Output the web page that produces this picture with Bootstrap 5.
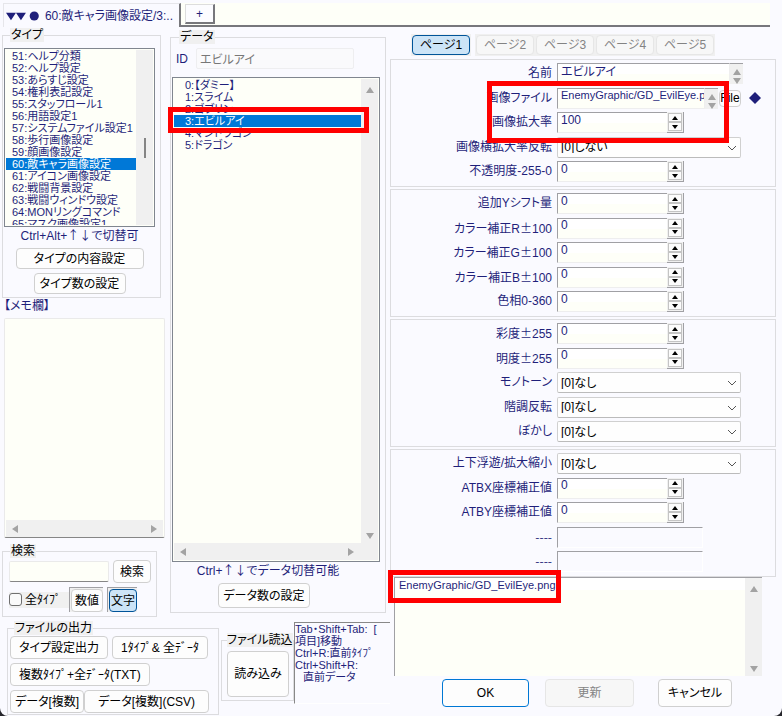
<!DOCTYPE html>
<html lang="ja">
<head>
<meta charset="utf-8">
<meta name="viewport" content="width=device-width, initial-scale=1">
<title>60:敵キャラ画像設定</title>
<link href="https://cdn.jsdelivr.net/npm/bootstrap@5.3.0/dist/css/bootstrap.min.css" rel="stylesheet">
<style>
:root{--ink:#1f1f7a;--paper:#fefff8;--face:#f0f0f0;--line:#dcdcdf;--edge:#a0a0a4;--hot:#ff0000}
html{background:#26262c}
body{background:transparent;color:var(--ink);font:12px/12px "Liberation Sans","Noto Sans CJK JP",sans-serif;font-feature-settings:"palt"}
button,input,select,textarea{font:inherit;font-feature-settings:inherit;color:inherit}
.app{background:#fafaff;min-height:100vh;border-radius:0 0 8px 8px;overflow:hidden}
.nowrap,.btn,label,.hint{white-space:nowrap}
.wide{font-family:"Noto Sans CJK JP",sans-serif;font-feature-settings:normal}
/* tab strip */
.strip{height:27px;padding:3px 12px 0 3px}
.tab-on{width:178px;border:1px solid #e6e6ea;border-width:1px 0 0 1px;border-right:2px solid #77777c;padding-left:2px;color:var(--ink);background:none}
.tab-rest{background:var(--paper);border-bottom:2px solid #77777c;padding:1px 0 0 4px;height:24px}
.tab-add{width:30px;height:20px;background:#fcfcff;border:1px solid #ddd;border-right:2px solid #77777c;border-bottom:2px solid #77777c;padding:0;line-height:14px}
/* page columns */
.split{display:grid;grid-template-columns:390fr 392fr}
.pair{display:grid;grid-template-columns:168fr 222fr}
fieldset.box{border:1px solid var(--line);min-width:0}
.box>legend{float:none;width:auto;height:14px;margin:0;padding:0 1px;font-size:12px;line-height:14px;background:var(--face);color:#000}
.type-box{margin:1px 7px 0 2px;padding:6px 5px 3px 1px}
.type-box>legend,.find-box>legend{margin-left:6px}
.data-box{margin:3px 4px 0 2px;padding:4px 5px 4px 1px}
.data-box>legend{margin-left:7px}
.find-box{margin:6px 11px 0 2px;padding:2px 5px 4px 6px}
.find-box>legend{margin-left:1px}
.out-box{margin:4px 0 0 7px;padding:1px 9px 1px 2px;width:212px}
.out-box>legend{margin-left:4px}
.read-box{margin:16px 0 0 2px;padding:4px 4px 3px 5px;width:73px}
.read-box>legend{padding:0}
/* list boxes */
.lbox{background:var(--paper);border:1px solid #80868f;padding:1px}
.lbox .list-group-item{border:0;border-radius:0;background:none;color:var(--ink);padding:0 0 0 6px;height:12px;line-height:12px;font-size:11px;white-space:nowrap;flex:none}
.lbox .list-group-item.active{background:#0078d7;color:#fff;margin:0}
.type-list{height:179px}
.data-list{height:485px}
.data-list .list-group-item{padding-left:11px}
.bar-v{width:17px;background:var(--face);flex:none}
.bar-h{height:17px;background:var(--face);padding:0 6px}
.thumb{width:2px;height:20px;background:#858585;margin-top:88px}
.tri{width:0;height:0;border:4px solid transparent}
.tri-u{border-bottom:6px solid #a3a3a3;border-top:0}
.tri-d{border-top:6px solid #a3a3a3;border-bottom:0}
.tri-l{border-right:6px solid #a3a3a3;border-left:0}
.tri-r{border-left:6px solid #a3a3a3;border-right:0}
.hint{line-height:16px}
/* push buttons */
.btn.key{--bs-btn-font-size:12px;--bs-btn-line-height:12px;--bs-btn-padding-x:0;--bs-btn-padding-y:0;--bs-btn-color:#000;--bs-btn-bg:#fdfdfd;--bs-btn-border-color:#d0d0d0;--bs-btn-border-radius:4px;--bs-btn-hover-color:#000;--bs-btn-hover-bg:#eef6fd;--bs-btn-hover-border-color:#0078d7;--bs-btn-disabled-color:#838383;--bs-btn-disabled-bg:#f7f7f7;--bs-btn-disabled-border-color:#e6e6e6;--bs-btn-disabled-opacity:1;--bs-btn-active-color:#000;--bs-btn-active-bg:#cce4f7;--bs-btn-active-border-color:#005499}
.key.main-key{--bs-btn-border-color:#0078d4}
.h21{height:21px}.h23{height:23px}.h25{height:25px}.h28{height:28px}
.w28{width:28px}.w32{width:32px}.w92{width:92px}.w128{width:128px}
.sunk{border-top:1px solid var(--edge);border-left:1px solid var(--edge);padding:1px 0 0 1px;background:var(--face)}
.page-keys{margin:7px 0 3px 21px}
.page-keys>span{background:var(--face);padding:1px;width:60px}
.page-keys .key{width:58px;height:20px}
/* text fields */
.field{background:linear-gradient(#fff 55%,var(--paper) 55%);border:1px solid #eee;border-top-color:var(--edge);border-left-color:var(--edge);border-radius:0;padding:0 0 6px 3px;height:21px;min-width:0;outline-offset:-1px}
.field.empty{background:#fafaff;border-color:var(--edge) #fff #fff var(--edge);width:146px}
.id-field{height:21px;border:1px solid #eeeef0;background:#fafafc;color:#777;padding:0 3px;min-width:0;width:158px;border-radius:2px}
.find-field{height:21px;width:100px;border:1px solid #eaeaea;border-bottom-color:#868686;background:var(--paper);border-radius:2px}
.area{display:block;width:100%;resize:none;border:0;background:transparent;padding:1px 4px;overflow:hidden;outline:0}
.memo{margin:4px 3px 0 4px;border:1px solid #eaeaea;border-bottom-color:#868686;border-radius:2px;background:var(--paper);padding:0 1px}
.memo .area{height:201px}
.memo-label{height:16px;line-height:16px;padding-left:4px}
.tick{width:13px;height:13px;margin:0 3px 0 0;border:1px solid #707070;border-radius:3px;appearance:none;background:#fafafa}
.tick:checked{background:#0078d4}
.tick-row{background:var(--face);height:16px;width:60px;color:#000}
.help{margin-top:5px;height:82px;border-top:1px solid #888;border-left:1px solid #888;border-bottom:1px solid #fff;overflow:hidden}
.help p{margin:0;font-size:11px;line-height:12px;white-space:nowrap}
/* property groups */
.grp{border:1px solid var(--line);margin:0 6px 0 0;padding:3px 3px 4px;min-height:128px;display:flex;flex-direction:column;justify-content:space-between;position:relative}
.grp+.grp{margin-top:2px}
.line{display:grid;grid-template-columns:158px 1fr;column-gap:5px;height:21px}
.line>label{text-align:right;line-height:20px}
.num{width:110px;appearance:textfield;border-right:0}
.num::-webkit-inner-spin-button{appearance:none}
.spin{width:17px;background:var(--face);border-right:1px solid var(--edge);border-bottom:1px solid var(--edge);padding:1px}
.spin button{flex:1;border:1px solid #c4c4c4;background:#fcfcfc;padding:0;line-height:0}
.spin svg{display:block;margin:auto}
.pick{width:184px;height:21px;border:1px solid #d0d0d0;border-bottom-color:#bbb;border-radius:2px;background:#fefefe;color:#000;line-height:12px;padding:0 20px 0 3px;appearance:none}
.pick-wrap{position:relative;width:184px}
.pick-wrap svg{position:absolute;right:4px;top:8px;pointer-events:none}
.name-field{width:173px}.file-field{width:148px;font-size:11px}
.mini{width:13px;background:var(--face);padding-top:5px;gap:3px;border-top:1px solid var(--edge)}
.file-key{width:22px;height:17px;margin:2px 0 0 1px}
.note{margin:0 20px 3px 4px;border-top:1px solid var(--edge);border-left:1px solid var(--edge);background:var(--paper);position:relative}
.note .area{height:98px;font-size:11px;background:linear-gradient(#fff 12px,transparent 12px)}
.w87{width:87px}.w89{width:89px}.w74{width:74px}
/* red call-outs laid over the form */
.callout{position:absolute;border:5px solid var(--hot);pointer-events:none;z-index:2}
.co-file{left:96px;top:21px;width:242px;height:62px}
.co-item{left:-5px;top:29px;width:201px;height:26px}
.co-note{left:-7px;top:-8px;width:173px;height:33px}
</style>
<script src="https://cdn.jsdelivr.net/npm/bootstrap@5.3.0/dist/js/bootstrap.bundle.min.js"></script>
</head>
<body>
<div class="app">
<header class="strip d-flex">
  <button type="button" class="tab-on d-flex align-items-center gap-1 nowrap">
    <svg width="42" height="12" viewBox="0 0 42 12" fill="#1f1f7a" aria-hidden="true"><path d="M0 2h12L6 11zM12 2h12L18 11z"/><circle cx="34" cy="6" r="5.500"/></svg>60:敵キャラ画像設定/3:..</button>
  <div class="tab-rest flex-grow-1"><button type="button" class="tab-add">+</button></div>
</header>

<main class="split">
<div>
  <div class="pair">
    <section>
      <fieldset class="box type-box">
        <legend>タイプ</legend>
        <div class="lbox type-list d-flex overflow-hidden">
          <div class="list-group rounded-0 flex-grow-1 overflow-hidden" role="listbox" aria-label="タイプ">
            <button type="button" class="list-group-item text-start">51:ヘルプ分類</button>
            <button type="button" class="list-group-item text-start">52:ヘルプ設定</button>
            <button type="button" class="list-group-item text-start">53:あらすじ設定</button>
            <button type="button" class="list-group-item text-start">54:権利表記設定</button>
            <button type="button" class="list-group-item text-start">55:スタッフロール1</button>
            <button type="button" class="list-group-item text-start">56:用語設定1</button>
            <button type="button" class="list-group-item text-start">57:システムファイル設定1</button>
            <button type="button" class="list-group-item text-start">58:歩行画像設定</button>
            <button type="button" class="list-group-item text-start">59:顔画像設定</button>
            <button type="button" class="list-group-item text-start active">60:敵キャラ画像設定</button>
            <button type="button" class="list-group-item text-start">61:アイコン画像設定</button>
            <button type="button" class="list-group-item text-start">62:戦闘背景設定</button>
            <button type="button" class="list-group-item text-start">63:戦闘ウィンドウ設定</button>
            <button type="button" class="list-group-item text-start">64:MONリングコマンド</button>
            <button type="button" class="list-group-item text-start">65:マスク画像設定1</button>
          </div>
          <div class="bar-v d-flex justify-content-center"><div class="thumb"></div></div>
        </div>
        <div class="hint text-center">Ctrl+Alt+<span class="wide">↑↓</span>で切替可</div>
        <div class="d-flex flex-column align-items-center gap-1 pt-1">
          <button type="button" class="btn key h21 w128">タイプの内容設定</button>
          <button type="button" class="btn key h21 w92">タイプ数の設定</button>
        </div>
      </fieldset>
      <label class="memo-label d-block" for="memo">【メモ欄】</label>
      <div class="memo">
        <textarea class="area" id="memo"></textarea>
        <div class="bar-h d-flex justify-content-between align-items-center"><i class="tri tri-l"></i><i class="tri tri-r"></i></div>
      </div>
      <fieldset class="box find-box">
        <legend>検索</legend>
        <div class="d-flex align-items-center gap-1">
          <input class="find-field" type="text" aria-label="検索文字">
          <button type="button" class="btn key h23 flex-grow-1">検索</button>
        </div>
        <div class="d-flex align-items-center pt-1">
          <label class="tick-row d-flex align-items-center" for="all"><input class="tick" type="checkbox" id="all">全ﾀｲﾌﾟ</label>
          <span class="sunk d-flex"><button type="button" class="btn key h23 w32">数値</button></span>
          <span class="sunk d-flex ms-1"><button type="button" class="btn key h23 w28 active">文字</button></span>
        </div>
      </fieldset>
    </section>

    <section>
      <fieldset class="box data-box">
        <legend>データ</legend>
        <div class="d-flex align-items-center">
          <label class="ps-1 pe-2" for="idname">ID</label>
          <input class="id-field" id="idname" type="text" value="エビルアイ" disabled>
        </div>
        <div class="lbox data-list d-flex flex-column position-relative mt-2">
          <div class="d-flex flex-grow-1">
            <div class="list-group rounded-0 flex-grow-1" role="listbox" aria-label="データ">
              <button type="button" class="list-group-item text-start">0:【ダミー】</button>
              <button type="button" class="list-group-item text-start">1:スライム</button>
              <button type="button" class="list-group-item text-start">2:ゴブリン</button>
              <button type="button" class="list-group-item text-start active">3:エビルアイ</button>
              <button type="button" class="list-group-item text-start">4:マンドラゴン</button>
              <button type="button" class="list-group-item text-start">5:ドラゴン</button>
            </div>
            <div class="bar-v d-flex flex-column align-items-center justify-content-between py-1"><i class="tri tri-u mt-1"></i><i class="tri tri-d"></i></div>
          </div>
          <div class="bar-h d-flex justify-content-between align-items-center pe-4"><i class="tri tri-l"></i><i class="tri tri-r"></i></div>
          <div class="callout co-item"></div>
        </div>
        <div class="hint text-center pe-3">Ctrl+<span class="wide">↑↓</span>でデータ切替可能</div>
        <div class="text-center pt-1 pe-4"><button type="button" class="btn key h25 w92">データ数の設定</button></div>
      </fieldset>
    </section>
  </div>

  <div class="d-flex align-items-start">
    <fieldset class="box out-box flex-shrink-0">
      <legend>ファイルの出力</legend>
      <div class="d-flex flex-column gap-1">
        <div class="d-flex gap-1"><button type="button" class="btn key h23 px-2">タイプ設定出力</button><button type="button" class="btn key h23 px-2">1ﾀｲﾌﾟ&amp; 全ﾃﾞｰﾀ</button></div>
        <div class="d-flex"><button type="button" class="btn key h23 px-2">複数ﾀｲﾌﾟ+全ﾃﾞｰﾀ(TXT)</button></div>
        <div class="d-flex"><button type="button" class="btn key h23 px-1">データ[複数]</button><button type="button" class="btn key h23 flex-grow-1">データ[複数](CSV)</button></div>
      </div>
    </fieldset>
    <fieldset class="box read-box flex-shrink-0">
      <legend class="nowrap">ファイル読込</legend>
      <button type="button" class="btn key w-100 py-3">読み込み</button>
    </fieldset>
    <div class="help flex-grow-1">
      <p>Tab・Shift+Tab:&nbsp; [</p><p>項目]移動</p><p>Ctrl+R:直前ﾀｲﾌﾟ</p><p>Ctrl+Shift+R:</p><p class="ps-2">直前データ</p>
    </div>
  </div>
</div>

<div>
  <nav class="page-keys d-flex" aria-label="ページ">
    <span><button type="button" class="btn key active">ページ1</button></span>
    <span class="ms-1"><button type="button" class="btn key" disabled>ページ2</button></span>
    <span><button type="button" class="btn key" disabled>ページ3</button></span>
    <span><button type="button" class="btn key" disabled>ページ4</button></span>
    <span><button type="button" class="btn key" disabled>ページ5</button></span>
  </nav>

  <div class="grp">
    <div class="line"><label for="f0">名前</label><div class="d-flex"><input class="field name-field" id="f0" type="text" value="エビルアイ"><span class="mini d-flex flex-column align-items-center"><i class="tri tri-u"></i><i class="tri tri-d"></i></span></div></div>
    <div class="line"><label for="f1">画像ファイル</label><div class="d-flex"><input class="field file-field" id="f1" type="text" value="EnemyGraphic/GD_EvilEye.png"><span class="mini d-flex flex-column align-items-center"><i class="tri tri-u"></i><i class="tri tri-d"></i></span><button type="button" class="btn key file-key">File</button><svg class="ms-2 mt-1" width="12" height="12" viewBox="0 0 12 12" aria-hidden="true"><path d="M6 0l6 6-6 6-6-6z" fill="#1f1f7a"/></svg></div></div>
    <div class="line"><label for="f2">画像拡大率</label><div class="d-flex" data-spin="100" data-id="f2"></div></div>
    <div class="line"><label for="f3">画像横拡大率反転</label><div class="pick-wrap"><select class="pick" id="f3"><option>[0]しない</option></select><svg width="10" height="6" viewBox="0 0 10 6" fill="none" stroke="#555"><path d="M1 1l4 4 4-4"/></svg></div></div>
    <div class="line"><label for="f4">不透明度-255-0</label><div class="d-flex" data-spin="0" data-id="f4"></div></div>
    <div class="callout co-file"></div>
  </div>
  <div class="grp">
    <div class="line"><label for="g0">追加Yシフト量</label><div class="d-flex" data-spin="0" data-id="g0"></div></div>
    <div class="line"><label for="g1">カラー補正R<span class="wide">±</span>100</label><div class="d-flex" data-spin="0" data-id="g1"></div></div>
    <div class="line"><label for="g2">カラー補正G<span class="wide">±</span>100</label><div class="d-flex" data-spin="0" data-id="g2"></div></div>
    <div class="line"><label for="g3">カラー補正B<span class="wide">±</span>100</label><div class="d-flex" data-spin="0" data-id="g3"></div></div>
    <div class="line"><label for="g4">色相0-360</label><div class="d-flex" data-spin="0" data-id="g4"></div></div>
  </div>
  <div class="grp">
    <div class="line"><label for="h0">彩度<span class="wide">±</span>255</label><div class="d-flex" data-spin="0" data-id="h0"></div></div>
    <div class="line"><label for="h1">明度<span class="wide">±</span>255</label><div class="d-flex" data-spin="0" data-id="h1"></div></div>
    <div class="line"><label for="h2">モノトーン</label><div class="pick-wrap"><select class="pick" id="h2"><option>[0]なし</option></select><svg width="10" height="6" viewBox="0 0 10 6" fill="none" stroke="#555"><path d="M1 1l4 4 4-4"/></svg></div></div>
    <div class="line"><label for="h3">階調反転</label><div class="pick-wrap"><select class="pick" id="h3"><option>[0]なし</option></select><svg width="10" height="6" viewBox="0 0 10 6" fill="none" stroke="#555"><path d="M1 1l4 4 4-4"/></svg></div></div>
    <div class="line"><label for="h4">ぼかし</label><div class="pick-wrap"><select class="pick" id="h4"><option>[0]なし</option></select><svg width="10" height="6" viewBox="0 0 10 6" fill="none" stroke="#555"><path d="M1 1l4 4 4-4"/></svg></div></div>
  </div>
  <div class="grp">
    <div class="line"><label for="k0">上下浮遊/拡大縮小</label><div class="pick-wrap"><select class="pick" id="k0"><option>[0]なし</option></select><svg width="10" height="6" viewBox="0 0 10 6" fill="none" stroke="#555"><path d="M1 1l4 4 4-4"/></svg></div></div>
    <div class="line"><label for="k1">ATBX座標補正値</label><div class="d-flex" data-spin="0" data-id="k1"></div></div>
    <div class="line"><label for="k2">ATBY座標補正値</label><div class="d-flex" data-spin="0" data-id="k2"></div></div>
    <div class="line"><label class="wide" for="k3">----</label><input class="field empty" id="k3" type="text" disabled></div>
    <div class="line"><label class="wide" for="k4">----</label><input class="field empty" id="k4" type="text" disabled></div>
  </div>
  <div class="note d-flex">
    <textarea class="area" aria-label="内容">EnemyGraphic/GD_EvilEye.png</textarea>
    <div class="bar-v d-flex flex-column align-items-center justify-content-between py-1"><i class="tri tri-u mt-1"></i><i class="tri tri-d"></i></div>
    <div class="callout co-note"></div>
  </div>
  <div class="d-flex gap-3 ps-5 ms-1">
    <button type="button" class="btn key main-key h28 w87">OK</button>
    <button type="button" class="btn key h28 w89" disabled>更新</button>
    <button type="button" class="btn key h28 w74 ms-2">キャンセル</button>
  </div>
</div>
</main>
</div>
<script>
// Numeric fields: an input with a pair of step buttons
document.querySelectorAll('[data-spin]').forEach(function (box) {
  box.innerHTML = '<input class="field num" type="number" id="' + box.dataset.id + '" value="' + box.dataset.spin + '">' +
    '<span class="spin d-flex flex-column">' +
    '<button type="button" aria-label="増やす"><svg width="6" height="4" viewBox="0 0 6 4"><path d="M3 0l3 4H0z"/></svg></button>' +
    '<button type="button" aria-label="減らす"><svg width="6" height="4" viewBox="0 0 6 4"><path d="M3 4l3-4H0z"/></svg></button></span>';
  var input = box.querySelector('input'), keys = box.querySelectorAll('button');
  keys[0].onclick = function () { input.stepUp(); };
  keys[1].onclick = function () { input.stepDown(); };
});
</script>
</body>
</html>
